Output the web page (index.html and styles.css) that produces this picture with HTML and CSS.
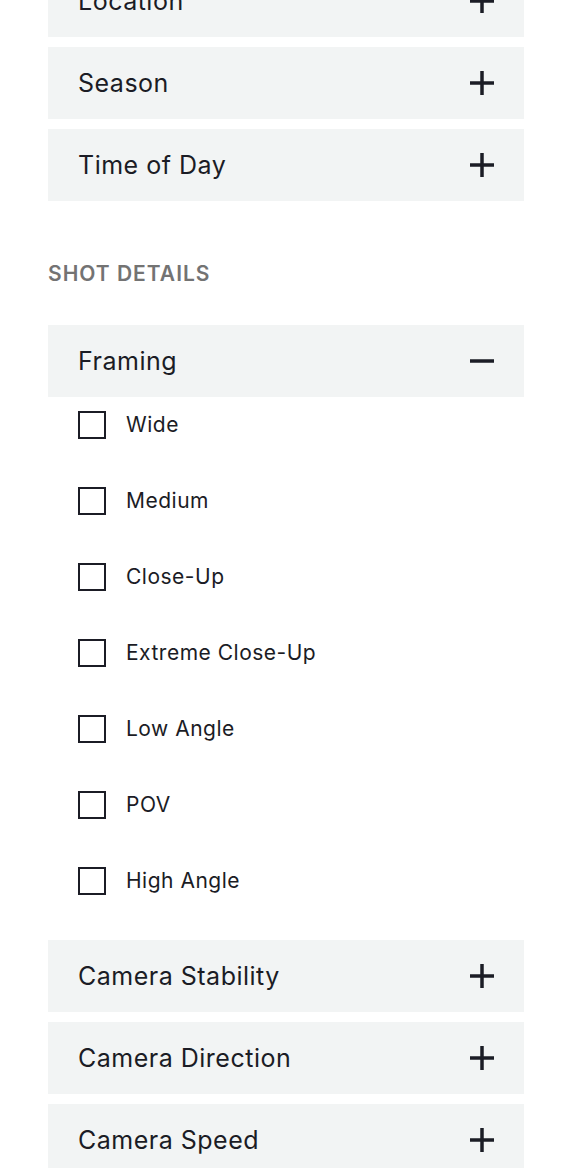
FILE: index.html
```html
<!DOCTYPE html>
<html lang="en">
<head>
<meta charset="utf-8">
<title>Filters</title>
<link rel="stylesheet" href="styles.css">
</head>
<body>
<div class="panel">
  <div class="group">
    <div class="acc-head"><span class="acc-title">Location</span><svg class="icon" viewBox="0 0 24 24"><rect x="0" y="10.25" width="24" height="3.5"/><rect x="10.25" y="0" width="3.5" height="24"/></svg></div>
    <div class="acc-head"><span class="acc-title">Season</span><svg class="icon" viewBox="0 0 24 24"><rect x="0" y="10.25" width="24" height="3.5"/><rect x="10.25" y="0" width="3.5" height="24"/></svg></div>
    <div class="acc-head"><span class="acc-title">Time of Day</span><svg class="icon" viewBox="0 0 24 24"><rect x="0" y="10.25" width="24" height="3.5"/><rect x="10.25" y="0" width="3.5" height="24"/></svg></div>
  </div>

  <h3 class="section-title">SHOT DETAILS</h3>

  <div class="group">
    <div class="acc">
      <div class="acc-head"><span class="acc-title">Framing</span><svg class="icon" viewBox="0 0 24 24"><rect x="0" y="10.25" width="24" height="3.5"/></svg></div>
      <ul class="options">
        <li class="option"><span class="box"></span><span class="label">Wide</span></li>
        <li class="option"><span class="box"></span><span class="label">Medium</span></li>
        <li class="option"><span class="box"></span><span class="label">Close-Up</span></li>
        <li class="option"><span class="box"></span><span class="label">Extreme Close-Up</span></li>
        <li class="option"><span class="box"></span><span class="label">Low Angle</span></li>
        <li class="option"><span class="box"></span><span class="label">POV</span></li>
        <li class="option"><span class="box"></span><span class="label">High Angle</span></li>
      </ul>
    </div>
    <div class="acc-head"><span class="acc-title">Camera Stability</span><svg class="icon" viewBox="0 0 24 24"><rect x="0" y="10.25" width="24" height="3.5"/><rect x="10.25" y="0" width="3.5" height="24"/></svg></div>
    <div class="acc-head"><span class="acc-title">Camera Direction</span><svg class="icon" viewBox="0 0 24 24"><rect x="0" y="10.25" width="24" height="3.5"/><rect x="10.25" y="0" width="3.5" height="24"/></svg></div>
    <div class="acc-head"><span class="acc-title">Camera Speed</span><svg class="icon" viewBox="0 0 24 24"><rect x="0" y="10.25" width="24" height="3.5"/><rect x="10.25" y="0" width="3.5" height="24"/></svg></div>
  </div>
</div>
</body>
</html>
```
FILE: styles.css
```css
html, body {
  margin: 0;
  padding: 0;
  background: #ffffff;
}
body {
  font-family: Inter, Lato, "Liberation Sans", sans-serif;
  color: #1b1c25;
  overflow: hidden;
}
.panel {
  width: 476px;
  margin: -35px 0 0 48px;
}
.group {
  display: flex;
  flex-direction: column;
  gap: 10px;
}
.acc-head {
  height: 72px;
  box-sizing: border-box;
  padding: 0 30px;
  background: #f2f4f4;
  display: flex;
  align-items: center;
  justify-content: space-between;
}
.acc-title {
  font-size: 25px;
  line-height: 30px;
  letter-spacing: 0.5px;
}
.icon {
  width: 24px;
  height: 24px;
  fill: #1b1c25;
  flex: none;
}
.section-title {
  margin: 61px 0 39px;
  font-size: 21px;
  line-height: 24px;
  font-weight: 600;
  color: #737373;
  letter-spacing: 1px;
}
.options {
  list-style: none;
  margin: 0;
  padding: 14px 0 35px 30px;
  display: flex;
  flex-direction: column;
  gap: 48px;
}
.option {
  display: flex;
  align-items: center;
  height: 28px;
}
.box {
  width: 28px;
  height: 28px;
  box-sizing: border-box;
  border: 2px solid #1b1c25;
  margin-right: 20px;
  flex: none;
}
.label {
  font-size: 21px;
  line-height: 26px;
  letter-spacing: 0.5px;
}
```
